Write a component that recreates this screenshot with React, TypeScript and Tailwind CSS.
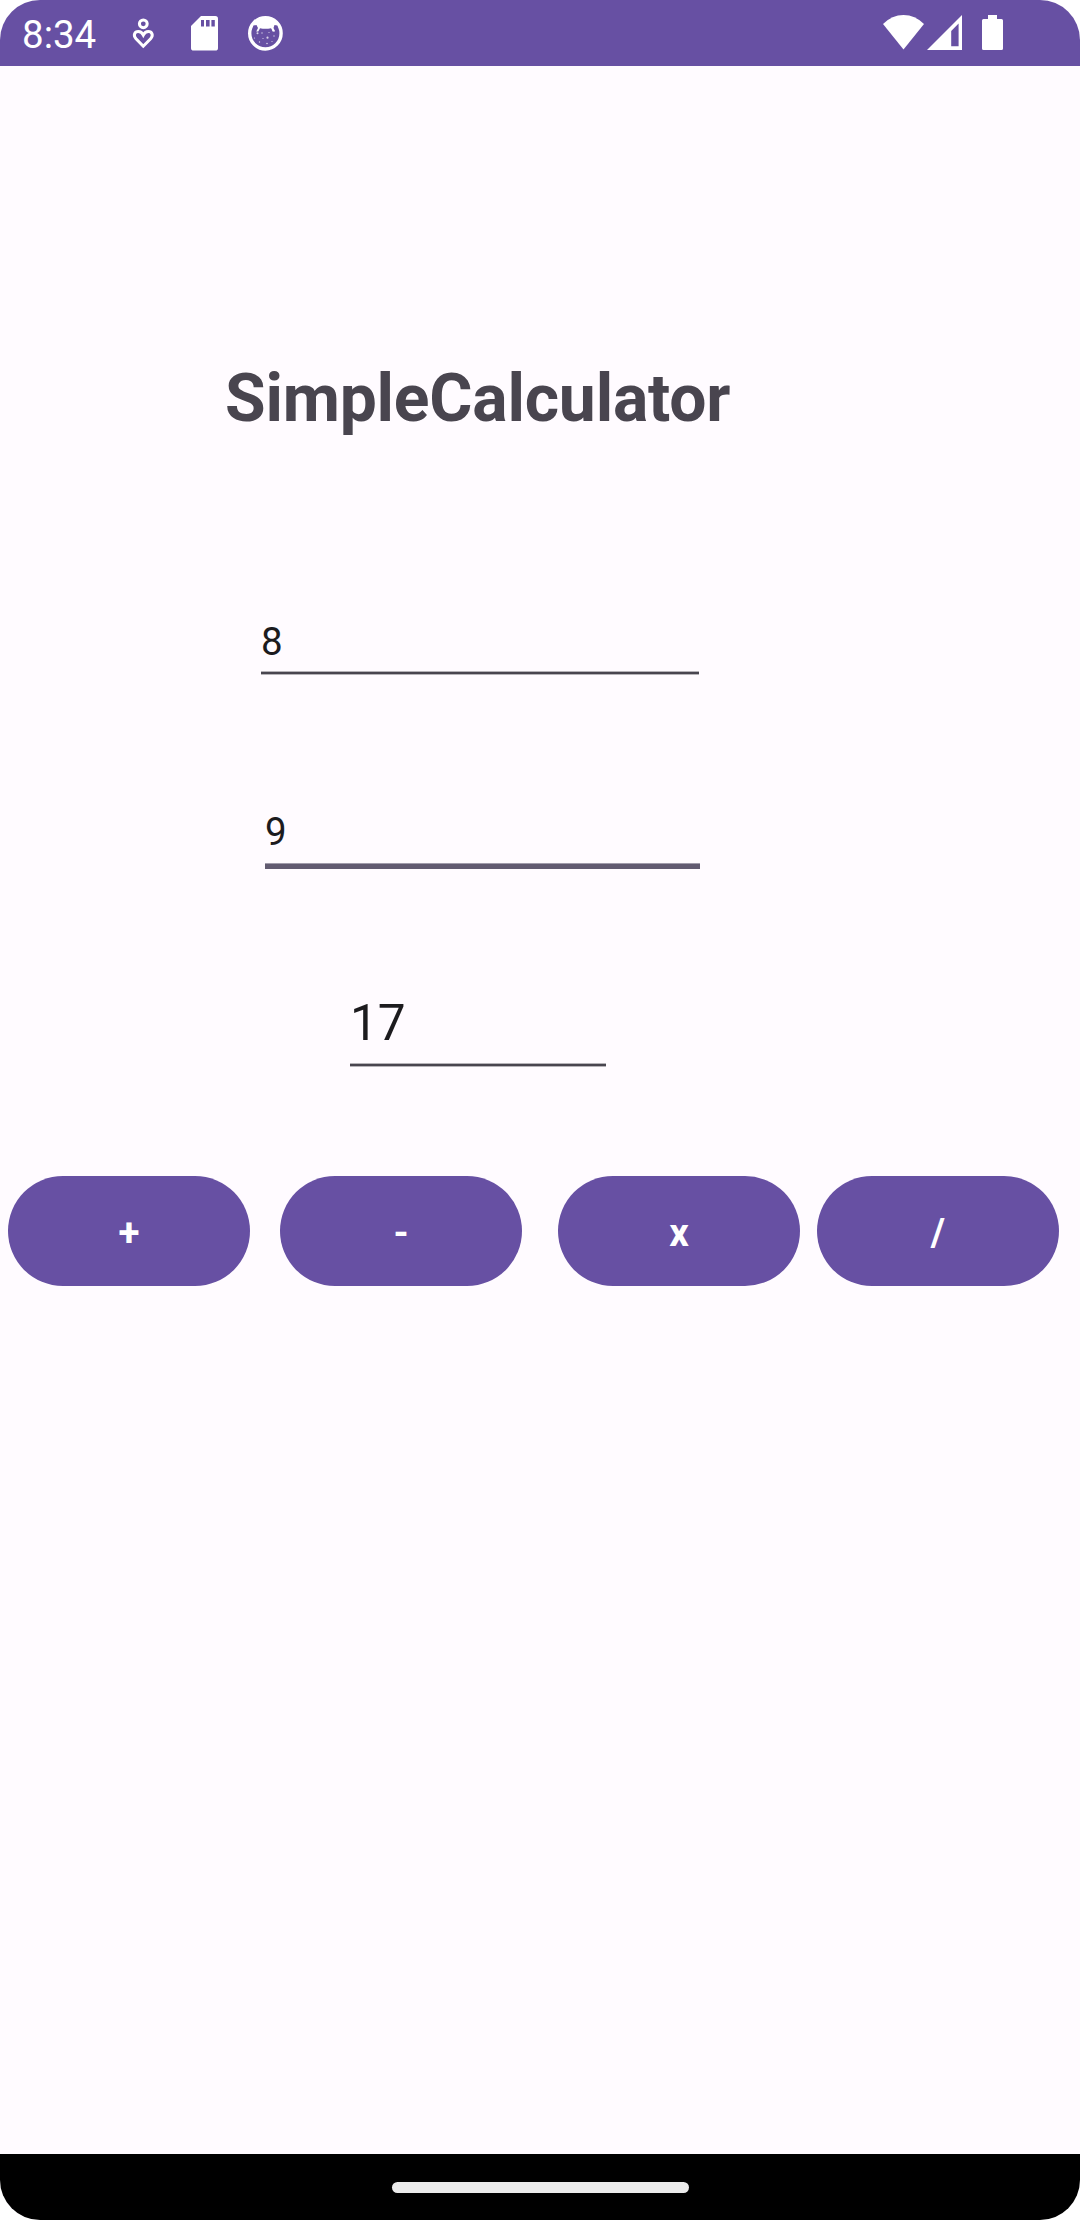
const operators = [
  { label: '+', gap: 'ml-[8px]' },
  { label: '-', gap: 'ml-[30px]' },
  { label: 'x', gap: 'ml-[36px]' },
  { label: '/', gap: 'ml-[17px]' },
];

function StatusBar() {
  return (
    <header className="flex h-[66px] items-start bg-[#6750a3] text-white">
      <span className="ml-[22px] mt-[12px] w-[100px] text-[38.5px] leading-[45px]">8:34</span>
      {/* Person above a heart */}
      <svg className="mt-[10px]" width="44" height="48" viewBox="122 10 44 48" fill="none" stroke="currentColor" strokeWidth="3">
        <circle cx="143.3" cy="23.8" r="3.9" />
        <path d="M143.3 46.2 L136 38.7 C132.8 35.2 134.7 31.6 138.3 31.6 C140.6 31.6 142.3 33 143.3 35 C144.3 33 146 31.6 148.3 31.6 C151.9 31.6 153.8 35.2 150.6 38.7 Z" />
      </svg>
      {/* Memory card */}
      <svg className="ml-[14px] mt-[10px]" width="50" height="48" viewBox="180 10 50 48">
        <path fill="currentColor" d="M201 16 H215.3 Q218 16 218 18.7 V48 Q218 50.6 215.3 50.6 H193.7 Q191 50.6 191 48 V26 Z" />
        <path fill="#6750a3" d="M201 20 h3 v6.5 h-3z M206 20 h3.6 v6.5 h-3.6z M211.4 20 h3.4 v6.5 h-3.4z" />
      </svg>
      {/* Round cat face */}
      <svg className="ml-[13px] mt-[10px]" width="46" height="48" viewBox="243 10 46 48">
        <circle cx="265.4" cy="33.3" r="15.7" fill="none" stroke="currentColor" strokeWidth="3.4" />
        <path fill="currentColor" d="M253.5 25.5 L256 21 Q265 14 275 21 L277.5 25.5 L274.8 31.5 H273 L271 28.2 Q265.4 29.2 260 28.2 L258.3 31.5 H256.5 Z" />
        <path fill="#6750a3" d="M253.5 25.5 L256.5 25 L258 28 L256.5 31 L252.5 31 Z M277.3 25.5 L274.5 25 L273.5 28 L275 31 L278.3 31 Z" />
        <g fill="currentColor" opacity=".75">
          <circle cx="257.5" cy="33.2" r="1" />
          <circle cx="262" cy="33" r=".7" />
          <circle cx="267.5" cy="37.7" r="1.1" />
          <circle cx="273" cy="30.6" r="1" />
          <circle cx="274" cy="36" r=".7" />
          <circle cx="269" cy="32.5" r=".6" />
          <circle cx="259.5" cy="42" r=".7" />
          <circle cx="263" cy="38.5" r=".6" />
          <circle cx="254.5" cy="38" r=".6" />
          <circle cx="267" cy="43.5" r=".8" />
          <circle cx="272" cy="41.5" r=".6" />
        </g>
      </svg>
      <svg className="ml-auto mt-[10px]" width="44" height="48" viewBox="882 10 44 48" fill="currentColor">
        <path d="M883 24 Q892 15 903.5 15 Q915 15 924 24 L903.5 49.5 Z" />
      </svg>
      <svg className="mt-[10px]" width="38" height="48" viewBox="926 10 38 48" fill="currentColor">
        <path fillRule="evenodd" d="M927 50 L962 15 V50 Z M951.2 46.3 H958.6 V23.5 L951.2 31 Z" />
      </svg>
      <svg className="mr-[74px] ml-[16px] mt-[10px]" width="26" height="48" viewBox="980 10 26 48" fill="currentColor">
        <path d="M988 15 H997 V19 H1001.5 Q1003 19 1003 20.5 V48.5 Q1003 50 1001.5 50 H983.5 Q982 50 982 48.5 V20.5 Q982 19 983.5 19 H988 Z" />
      </svg>
    </header>
  );
}

export default function App() {
  return (
    <div className="h-[2220px] w-[1080px] bg-white">
      <div className="flex h-full flex-col overflow-hidden rounded-[40px] bg-[#fffbff] font-['Roboto',sans-serif] text-[#1c1b1e]">
        <StatusBar />
        <main className="flex flex-1 flex-col items-start">
          <h1 className="mt-[293px] ml-[225px] text-[66px] leading-[80px] font-bold tracking-[-0.2px] text-[#49454f]">
            SimpleCalculator
          </h1>

          <div className="mt-[180px] ml-[261px] w-[438px]">
            <div className="h-[52px] text-[38.5px] leading-[45px]">8</div>
            <div className="h-[4px] border-y border-[#b6b3b8] bg-[#49454f]" />
          </div>
          <div className="mt-[134px] ml-[265px] w-[435px]">
            <div className="h-[54px] text-[38.5px] leading-[45px]">9</div>
            <div className="h-[6px] border-t border-[#a19cab] bg-[#625b71]" />
          </div>
          <div className="mt-[124px] ml-[350px] w-[256px]">
            <div className="h-[70px] text-[49.5px] leading-[60px]">17</div>
            <div className="h-[4px] border-y border-[#b6b3b8] bg-[#49454f]" />
          </div>

          <div className="mt-[109px] flex">
            {operators.map(({ label, gap }) => (
              <button
                key={label}
                className={`${gap} flex h-[110px] w-[242px] items-center justify-center rounded-full bg-[#6750a3] pt-[4px] text-[38.5px] leading-[46px] font-bold text-white`}
              >
                {label}
              </button>
            ))}
          </div>
        </main>
        <nav className="flex h-[66px] items-center justify-center bg-black">
          <div className="h-[11px] w-[297px] rounded-full bg-[#ebebeb]" />
        </nav>
      </div>
    </div>
  );
}
